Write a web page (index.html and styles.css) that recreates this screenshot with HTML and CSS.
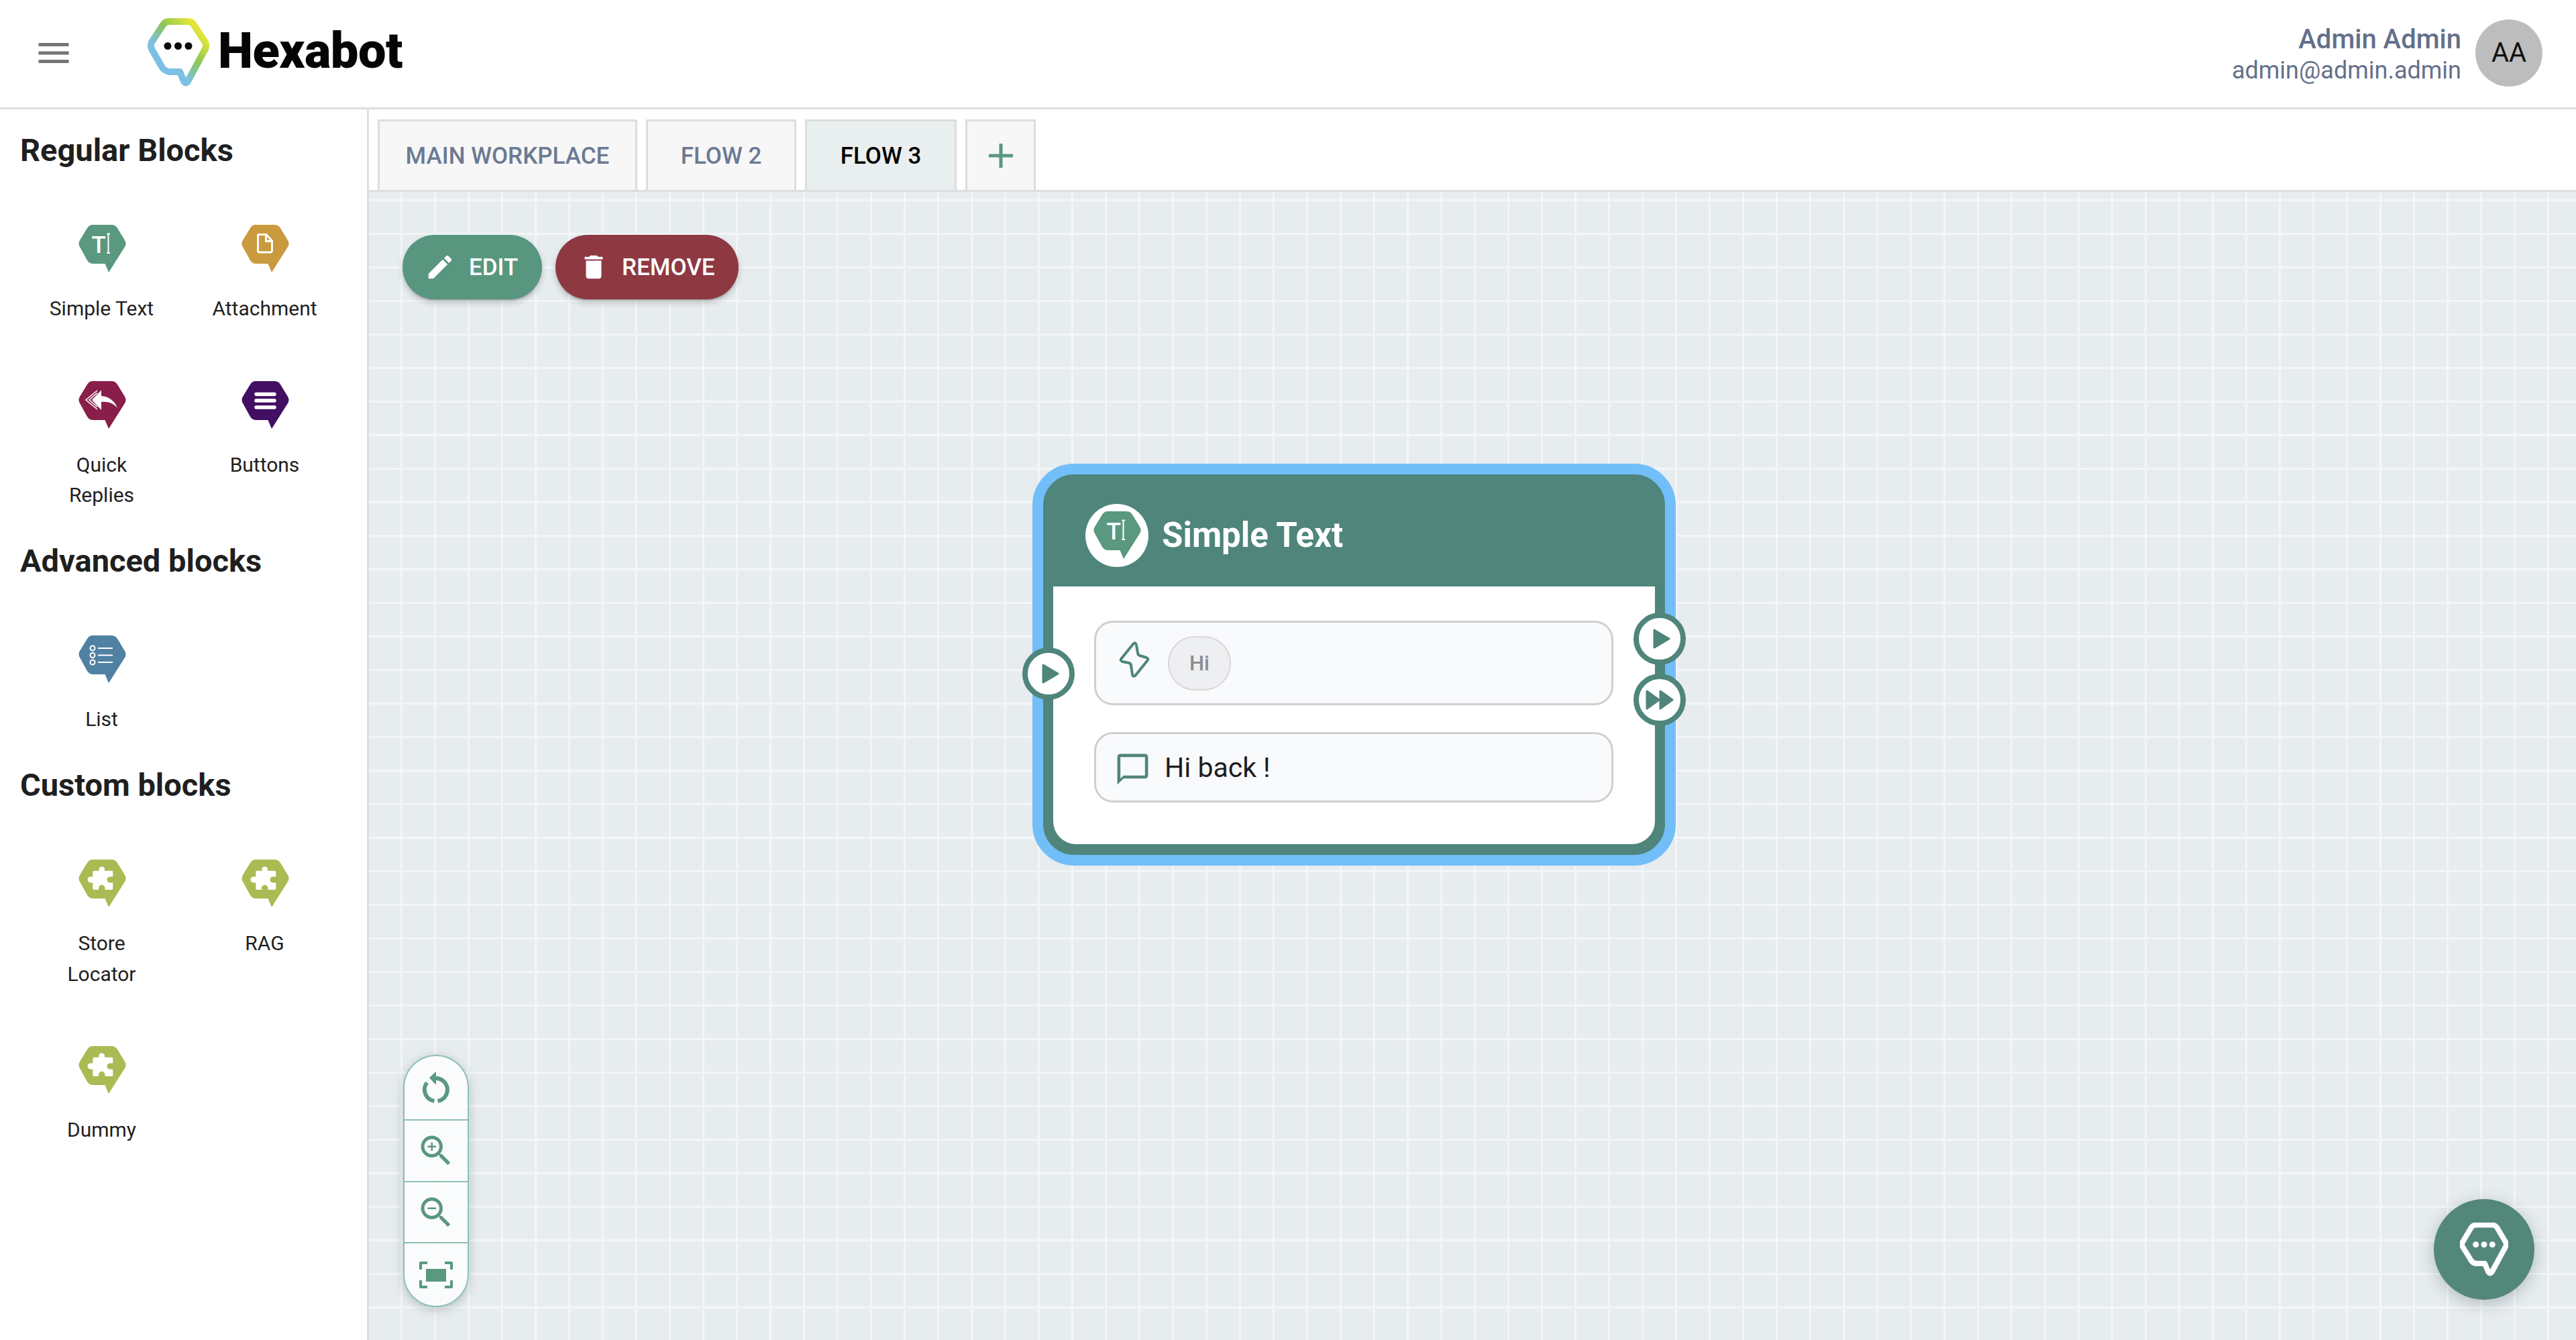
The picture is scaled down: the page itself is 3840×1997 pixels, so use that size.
FILE: index.html
```html
<!DOCTYPE html>
<html lang="en">
<head>
<meta charset="utf-8">
<title>Hexabot</title>
<link rel="stylesheet" href="styles.css">
</head>
<body>
<svg class="defs" width="0" height="0" aria-hidden="true">
  <defs>
    <path id="hex" d="M22 0H50Q56 0 59 5L70 23Q73 28 70 33L46 71L40.500 58H23Q17 58 14 53L3 33Q0 28 3 23L14 5Q17 0 22 0Z"/>
    <path id="puzzle" d="M24 16.700H31.500V13.500A4.500 4.500 0 0 1 40 13.500V16.700H50.500Q52.300 16.700 52.300 18.500V25.500H48A4.500 4.500 0 0 0 48 34.500H52.300V43Q52.300 45 50.500 45H40.500V42.500A4.500 4.500 0 0 0 31 42.500V45H24Q22.300 45 22.300 43V34.500H19A4.500 4.500 0 0 1 19 25.500H22.300V18.500Q22.300 16.700 24 16.700Z"/>
    <linearGradient id="logoGrad" x1="0.1" y1="0.85" x2="0.85" y2="0.05">
      <stop offset="0.28" stop-color="#7cc0e6"/>
      <stop offset="0.6" stop-color="#8cc659"/>
      <stop offset="0.95" stop-color="#e2e638"/>
    </linearGradient>
  </defs>
</svg>

<header class="topbar">
  <div class="brand">
    <svg class="menu-icon" viewBox="0 0 24 24" width="60" height="60"><path d="M3 18h18v-2H3v2zm0-5h18v-2H3v2zm0-7v2h18V6H3z"/></svg>
    <svg class="logo-mark" viewBox="0 0 92 103" width="92" height="103">
      <path d="M32 5H60Q66 5 69 10L86 36Q88 41 86 46L60 94Q57 99 54 94L48 80H33Q26 79 22 74L6 46Q4 41 6 36L23 10Q26 5 32 5Z" fill="none" stroke="url(#logoGrad)" stroke-width="10" stroke-linejoin="round"/>
      <circle cx="30" cy="41.500" r="5.500"/><circle cx="45.500" cy="41.500" r="5.500"/><circle cx="61" cy="41.500" r="5.500"/>
    </svg>
    <span class="logo-text">Hexabot</span>
  </div>
  <div class="user">
    <div class="user-text">
      <div class="user-name">Admin Admin</div>
      <div class="user-mail">admin@admin.admin</div>
    </div>
    <div class="avatar">AA</div>
  </div>
</header>

<div class="main">
  <aside class="sidebar">
    <section class="group">
      <h2 class="group-title">Regular Blocks</h2>
      <div class="block-grid">
        <div class="block">
          <svg class="hex-icon c-green" viewBox="0 0 72 71"><use href="#hex"/>
            <text class="t-glyph" x="20.500" y="41.700">T</text><path class="cursor" d="M43.300 13.500H48M45.500 13.500V42M43.300 42H48"/></svg>
          <span class="block-label">Simple Text</span>
        </div>
        <div class="block">
          <svg class="hex-icon c-gold" viewBox="0 0 72 71"><use href="#hex"/>
            <path class="file" d="M27 14.500H38L46.500 24V38Q46.500 41 44 41H28Q25.500 41 25.500 38V16Q25.500 14.500 27 14.500ZM37.500 15V24.500H46"/></svg>
          <span class="block-label">Attachment</span>
        </div>
        <div class="block">
          <svg class="hex-icon c-wine" viewBox="0 0 72 71"><use href="#hex"/>
            <path class="white" d="M35 13.500L21 28L35 43V31C45 30 53 33 59 40C55 30 47 23 35 22Z"/>
            <path class="thin" d="M29 14L12 28L29 42M29 17.500L17 28L29 38.500"/></svg>
          <span class="block-label">Quick Replies</span>
        </div>
        <div class="block">
          <svg class="hex-icon c-purple" viewBox="0 0 72 71"><use href="#hex"/>
            <path class="bars" d="M23 19.500H50M23 29H50M23 39H50"/></svg>
          <span class="block-label">Buttons</span>
        </div>
      </div>
    </section>
    <section class="group">
      <h2 class="group-title">Advanced blocks</h2>
      <div class="block-grid">
        <div class="block">
          <svg class="hex-icon c-blue" viewBox="0 0 72 71"><use href="#hex"/>
            <g class="list-lines"><circle cx="22" cy="19" r="3.500"/><circle cx="22" cy="29.500" r="3.500"/><circle cx="22" cy="40" r="3.500"/><path d="M30 19H52M30 29.500H52M30 40H52"/></g></svg>
          <span class="block-label">List</span>
        </div>
      </div>
    </section>
    <section class="group">
      <h2 class="group-title">Custom blocks</h2>
      <div class="block-grid">
        <div class="block">
          <svg class="hex-icon c-olive" viewBox="0 0 72 71"><use href="#hex"/><use class="white" href="#puzzle"/></svg>
          <span class="block-label">Store Locator</span>
        </div>
        <div class="block">
          <svg class="hex-icon c-olive" viewBox="0 0 72 71"><use href="#hex"/><use class="white" href="#puzzle"/></svg>
          <span class="block-label">RAG</span>
        </div>
        <div class="block">
          <svg class="hex-icon c-olive" viewBox="0 0 72 71"><use href="#hex"/><use class="white" href="#puzzle"/></svg>
          <span class="block-label">Dummy</span>
        </div>
      </div>
    </section>
  </aside>

  <div class="workspace">
    <nav class="tabs">
      <div class="tab tab-main">MAIN WORKPLACE</div>
      <div class="tab">FLOW 2</div>
      <div class="tab tab-active">FLOW 3</div>
      <div class="tab tab-add"><svg viewBox="0 0 36 36" width="36" height="36"><path d="M18 0V36M0 18H36"/></svg></div>
    </nav>
    <div class="canvas">
      <div class="actions">
        <button class="pill pill-edit">
          <svg viewBox="0 0 24 24" width="46" height="46"><path d="M3 17.250V21h3.750L17.810 9.940l-3.750-3.750L3 17.250zM20.710 7.040c.39-.39.39-1.020 0-1.410l-2.340-2.340c-.39-.39-1.020-.39-1.410 0l-1.830 1.830 3.750 3.750 1.830-1.830z"/></svg>
          EDIT
        </button>
        <button class="pill pill-remove">
          <svg viewBox="0 0 24 24" width="46" height="46"><path d="M6 19c0 1.100.9 2 2 2h8c1.100 0 2-.9 2-2V7H6v12zM19 4h-3.500l-1-1h-5l-1 1H5v2h14V4z"/></svg>
          REMOVE
        </button>
      </div>

      <article class="node">
        <div class="node-head">
          <div class="node-badge">
            <svg class="hex-icon c-green" viewBox="0 0 72 71"><use href="#hex"/>
              <text class="t-glyph" x="20.500" y="41.700">T</text><path class="cursor" d="M43.300 13.500H48M45.500 13.500V42M43.300 42H48"/></svg>
          </div>
          <div class="node-title">Simple Text</div>
        </div>
        <div class="node-body">
          <div class="field field-trigger">
            <svg class="bolt" viewBox="0 0 46 58" width="46" height="58"><path d="M21 5Q24 1 26 6L28 18Q28 21 31 22L41 25Q45 27 42 30L25 51Q21 55 20 50L18 37Q18 34 15 33L5 31Q1 29 4 26Z"/></svg>
            <span class="chip">Hi</span>
          </div>
          <div class="field field-msg">
            <svg class="bubble" viewBox="0 0 24 24" width="55" height="55"><path d="M20 2H4c-1.100 0-2 .9-2 2v18l4-4h14c1.100 0 2-.9 2-2V4c0-1.100-.9-2-2-2zm0 14H6l-2 2V4h16v12z"/></svg>
            <span class="msg-text">Hi back !</span>
          </div>
        </div>
        <div class="port port-in"><svg viewBox="0 0 26 32" width="26" height="32"><path d="M2 3L24 16L2 29Z"/></svg></div>
        <div class="port port-out-a"><svg viewBox="0 0 26 32" width="26" height="32"><path d="M2 3L24 16L2 29Z"/></svg></div>
        <div class="port port-out-b"><svg viewBox="0 0 42 32" width="42" height="32"><path d="M2 3L20 16L2 29ZM22 3L40 16L22 29Z"/></svg></div>
      </article>

      <div class="controls">
        <div class="ctl">
          <svg class="ctl-stroke" viewBox="0 0 60 60" width="60" height="60"><path d="M30 13A17 17 0 0 1 32.500 46.800M27.500 46.800A17 17 0 0 1 16.500 19.500"/><path class="ctl-solid" d="M30 2.700L20 12.300L30 22.700Z"/></svg>
        </div>
        <div class="ctl">
          <svg class="ctl-fill" viewBox="0 0 24 24" width="60" height="60"><path d="M15.500 14h-.79l-.28-.27C15.410 12.590 16 11.110 16 9.500 16 5.910 13.090 3 9.500 3S3 5.910 3 9.500 5.910 16 9.500 16c1.610 0 3.090-.59 4.230-1.570l.27.28v.79l5 4.990L20.490 19l-4.990-5zm-6 0C7.010 14 5 11.990 5 9.500S7.010 5 9.500 5 14 7.010 14 9.500 11.990 14 9.500 14z"/><path d="M12 10h-2v2H9v-2H7V9h2V7h1v2h2v1z"/></svg>
        </div>
        <div class="ctl">
          <svg class="ctl-fill" viewBox="0 0 24 24" width="60" height="60"><path d="M15.500 14h-.79l-.28-.27C15.410 12.590 16 11.110 16 9.500 16 5.910 13.090 3 9.500 3S3 5.910 3 9.500 5.910 16 9.500 16c1.610 0 3.090-.59 4.230-1.570l.27.28v.79l5 4.990L20.490 19l-4.990-5zm-6 0C7.010 14 5 11.990 5 9.500S7.010 5 9.500 5 14 7.010 14 9.500 11.990 14 9.500 14z"/><path d="M7 9h5v1H7z"/></svg>
        </div>
        <div class="ctl">
          <svg class="ctl-fill" viewBox="0 0 50 40" width="50" height="40"><path d="M0 12V2Q0 0 2 0H12V4H4V12ZM38 0H48Q50 0 50 2V12H46V4H38ZM0 28H4V36H12V40H2Q0 40 0 38ZM46 28H50V38Q50 40 48 40H38V36H46Z"/><rect x="10" y="11" width="30" height="19"/></svg>
        </div>
      </div>

      <div class="chat-fab">
        <svg viewBox="0 0 72 80" width="72" height="80">
          <path d="M24 3.500H48Q52 3.500 55 7L68 29Q70 32.500 68 36L48 73Q45 78 42 73L37 61H25Q20 61 17 57L4 36Q2 32.500 4 29L17 7Q20 3.500 24 3.500Z" fill="none" stroke="#fff" stroke-width="8" stroke-linejoin="round"/>
          <circle cx="23.700" cy="32.700" r="4.500"/><circle cx="36" cy="32.700" r="4.500"/><circle cx="48.300" cy="32.700" r="4.500"/>
        </svg>
      </div>
    </div>
  </div>
</div>
</body>
</html>
```

FILE: styles.css
```css
* { box-sizing: border-box; }
html, body { margin: 0; height: 1997px; overflow: hidden; }
body {
  display: flex;
  flex-direction: column;
  background: #fff;
  font-family: Roboto, "Liberation Sans", sans-serif;
  color: #1d1d1f;
}
.defs { position: absolute; }

/* top bar */
.topbar {
  height: 163px;
  flex: none;
  display: flex;
  align-items: center;
  justify-content: space-between;
  padding: 0 50px 3px 50px;
  border-bottom: 3px solid #dedede;
}
.brand { display: flex; align-items: center; }
.menu-icon { fill: #757575; margin-top: 0; }
.logo-mark { margin: 0 0 0 110px; fill: #0a0a0a; }
.logo-text {
  margin-left: 13px;
  font-size: 74px;
  font-weight: 900;
  color: #050505;
  letter-spacing: -0.5px;
  line-height: 1;
  margin-top: -5px;
}
.user { display: flex; align-items: center; gap: 21px; }
.user-text { text-align: right; color: #64708a; padding-top: 4px; }
.user-name { font-size: 40px; font-weight: 500; line-height: 48px; }
.user-mail { font-size: 36px; line-height: 44px; }
.avatar {
  width: 100px;
  height: 100px;
  border-radius: 50%;
  background: #bdbdbd;
  color: #111;
  display: flex;
  align-items: center;
  justify-content: center;
  font-size: 40px;
}

/* main */
.main { flex: 1; display: flex; min-height: 0; }
.sidebar {
  width: 550px;
  flex: none;
  border-right: 3px solid #dcdfe1;
  padding: 31px 30px 0 30px;
}
.group { margin-bottom: 45.500px; }
.group-title {
  margin: 0;
  font-size: 47px;
  font-weight: 700;
  line-height: 60px;
  color: #1f1f1f;
}
.block-grid {
  display: grid;
  grid-template-columns: 243px 243px;
  row-gap: 85px;
  padding-top: 81px;
}
.block {
  display: flex;
  flex-direction: column;
  align-items: center;
  gap: 31px;
  padding: 0 38px;
}
.hex-icon { width: 72px; height: 71px; display: block; flex: none; }
.block-label {
  font-size: 30px;
  line-height: 45.500px;
  text-align: center;
  color: #1f1f1f;
}
.c-green { fill: #5a9880; }
.c-gold { fill: #c99a3e; }
.c-wine { fill: #891e4a; }
.c-purple { fill: #420f62; }
.c-blue { fill: #5081a3; }
.c-olive { fill: #abba52; }
.white { fill: #fff; }
.t-glyph { fill: #fff; font-family: Roboto, sans-serif; font-size: 35px; font-weight: 500; }
.cursor { fill: none; stroke: #fff; stroke-width: 2; }
.file { fill: none; stroke: #fff; stroke-width: 3; stroke-linejoin: round; }
.thin { fill: none; stroke: #fff; stroke-width: 1.600; }
.bars { fill: none; stroke: #fff; stroke-width: 5.500; stroke-linecap: round; }
.list-lines { fill: none; stroke: #fff; stroke-width: 2; }

/* workspace */
.workspace { flex: 1; min-width: 0; display: flex; flex-direction: column; }
.tabs {
  height: 123px;
  flex: none;
  display: flex;
  gap: 13px;
  padding: 15px 0 0 13px;
  border-bottom: 3px solid #dcdfe1;
}
.tab {
  min-width: 224px;
  padding: 0 38px;
  display: flex;
  align-items: center;
  justify-content: center;
  background: #f7f7f7;
  border: 3px solid #dddddd;
  border-bottom: 0;
  font-size: 35px;
  font-weight: 500;
  color: #6b7a92;
}
.tab-main { width: 387px; padding: 0; }
.tab-active { background: #e9eeef; color: #000; min-width: 226px; }
.tab-add { min-width: 105px; width: 105px; padding: 0; }
.tab-add svg { fill: none; stroke: #5a9880; stroke-width: 5; }

.canvas {
  flex: 1;
  position: relative;
  overflow: hidden;
  background-color: #e7ecef;
  background-image:
    linear-gradient(to right, transparent 47px, #f3f6f8 47px),
    linear-gradient(to bottom, transparent 47px, #f3f6f8 47px);
  background-size: 50px 50px;
  background-position: 0 14px;
}

.actions { position: absolute; left: 50px; top: 64px; display: flex; gap: 20px; }
.pill {
  height: 96px;
  border: 0;
  border-radius: 48px;
  display: flex;
  align-items: center;
  color: #fff;
  font-family: inherit;
  font-size: 35px;
  font-weight: 500;
  box-shadow: 0 3px 3px -2px rgba(0,0,0,.3), 0 5px 10px 0 rgba(0,0,0,.2);
}
.pill svg { fill: #fff; }
.pill-edit { background: #58967f; width: 208px; padding: 0 0 0 33px; gap: 20px; }
.pill-remove { background: #8e3842; width: 273px; padding: 0 0 0 34px; gap: 19px; }

/* node */
.node {
  position: absolute;
  left: 989px;
  top: 405px;
  width: 959px;
  height: 599px;
  border: 16px solid #72bef9;
  border-radius: 62px;
  background: #4f857a;
  padding: 0 15px 16px;
  display: flex;
  flex-direction: column;
}
.node-head {
  height: 167px;
  flex: none;
  display: flex;
  align-items: center;
  padding: 14px 0 0 48px;
  gap: 20px;
}
.node-badge {
  width: 94px;
  height: 94px;
  border-radius: 50%;
  background: #fff;
  display: flex;
  align-items: center;
  justify-content: center;
}
.node-title { font-size: 51px; font-weight: 700; color: #fff; }
.node-body {
  flex: 1;
  background: #fff;
  border-radius: 0 0 34px 34px;
  padding: 51px 62px 62px 61px;
  display: flex;
  flex-direction: column;
  gap: 40px;
}
.field {
  display: flex;
  align-items: center;
  background: #f9fafc;
  border: 3px solid #cfcfcf;
  border-radius: 28px;
}
.field-trigger { height: 126px; padding-left: 34px; gap: 27px; }
.field-msg { height: 105px; padding-left: 27px; gap: 20px; }
.bolt { fill: none; stroke: #4f857a; stroke-width: 4; stroke-linejoin: round; margin-top: -8px; }
.bubble { fill: #4f857a; margin-top: 6px; }
.chip {
  width: 94px;
  height: 81px;
  border-radius: 40px;
  background: #eeeff1;
  border: 2px solid #d8d8da;
  color: #8c8c92;
  font-size: 31px;
  font-weight: 500;
  display: flex;
  align-items: center;
  justify-content: center;
}
.msg-text { font-size: 41px; color: #1d1d1f; }

.port {
  position: absolute;
  width: 78px;
  height: 78px;
  border-radius: 50%;
  background: #fff;
  border: 8px solid #4f857a;
  display: flex;
  align-items: center;
  justify-content: center;
}
.port svg { fill: #4f857a; stroke: #4f857a; stroke-width: 3; stroke-linejoin: round; }
.port-in { left: -31px; top: 258px; }
.port-in svg, .port-out-a svg { margin-left: 6px; }
.port-out-a { right: -31px; top: 206px; }
.port-out-b { right: -31px; top: 297px; }

/* zoom controls */
.controls {
  position: absolute;
  left: 51px;
  top: 1286px;
  width: 98px;
  height: 376px;
  display: grid;
  grid-template-rows: 96px 92px 91px 1fr;
  border: 2px solid #8cc0b0;
  border-radius: 49px;
  background: rgba(255,255,255,.8);
  box-shadow: 0 4px 16px rgba(60,80,90,.28);
  overflow: hidden;
}
.ctl {
  display: flex;
  align-items: center;
  justify-content: center;
  border-bottom: 2px solid #8cc0b0;
}
.ctl:last-child { border-bottom: 0; }
.ctl-fill { fill: #5a9880; }
.ctl-stroke { fill: none; stroke: #5a9880; stroke-width: 6; margin-top: 6px; }
.ctl-solid { fill: #5a9880; stroke: none; }

.chat-fab {
  position: absolute;
  right: 62px;
  bottom: 60px;
  width: 150px;
  height: 150px;
  border-radius: 50%;
  background: #53877a;
  display: flex;
  align-items: center;
  justify-content: center;
  box-shadow: 0 6px 24px rgba(60,80,90,.3);
}
.chat-fab svg { fill: #fff; }
```
